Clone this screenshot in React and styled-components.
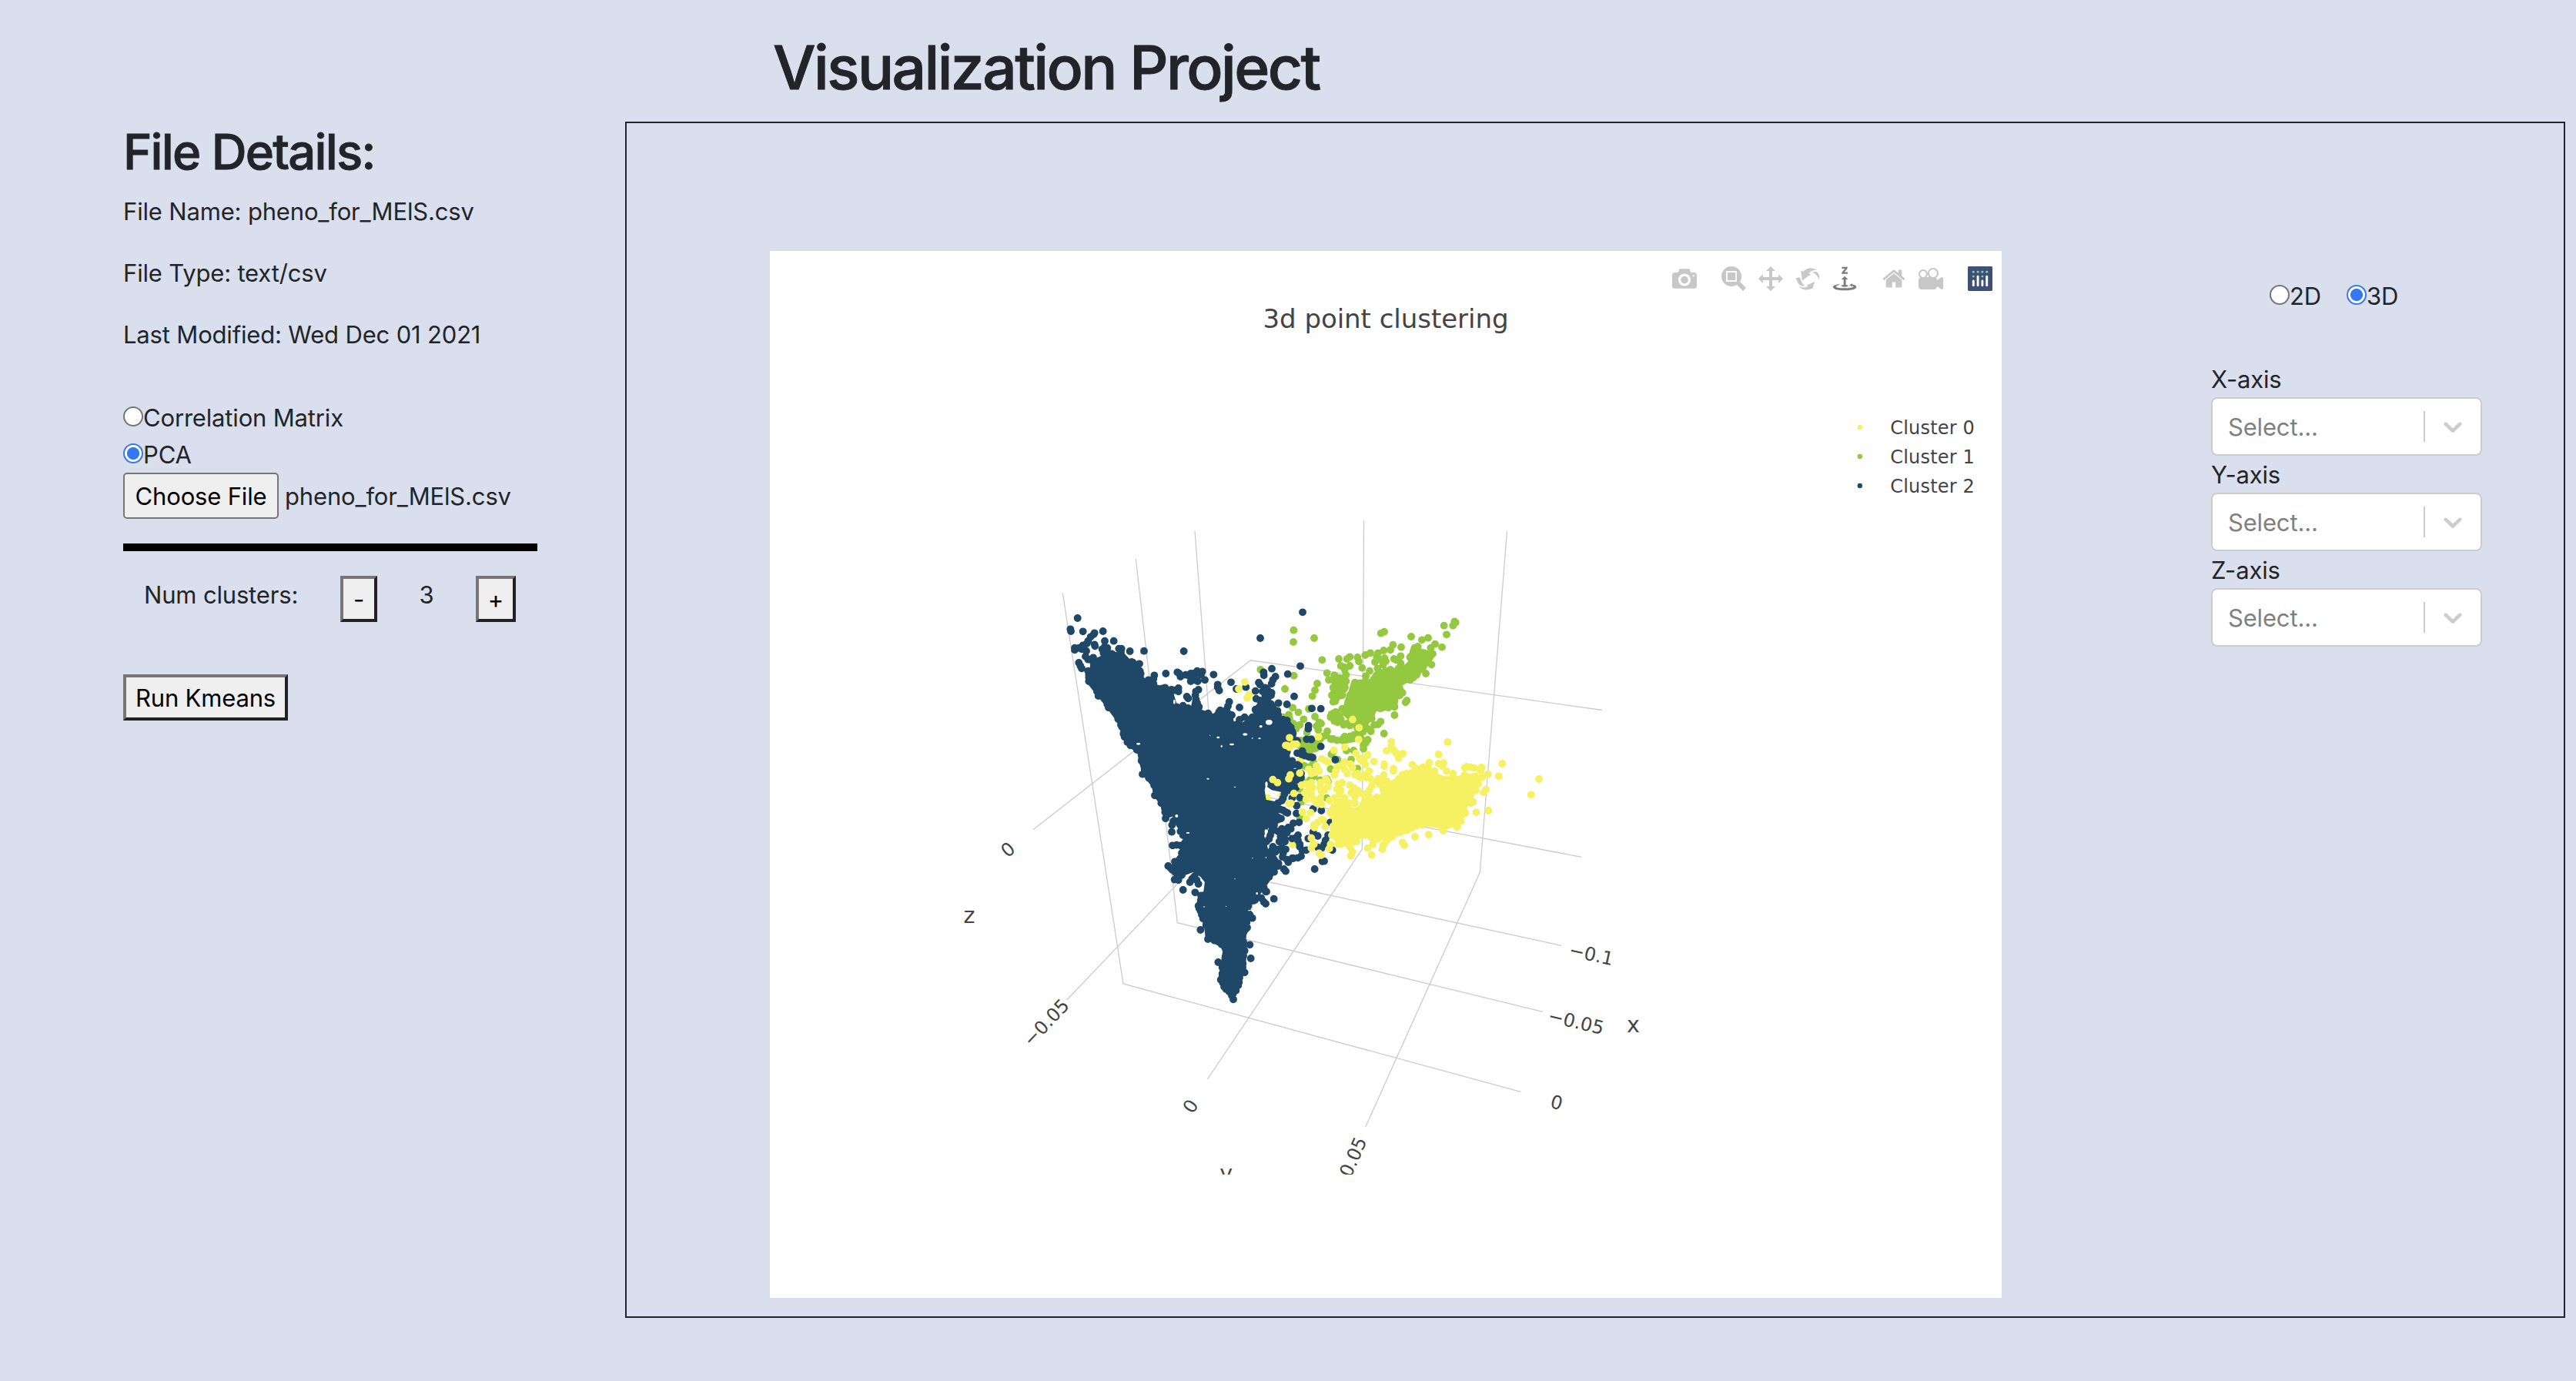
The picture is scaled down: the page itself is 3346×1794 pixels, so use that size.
import React, { useState } from "react";
import styled, { createGlobalStyle, css } from "styled-components";

const GlobalStyle = createGlobalStyle`
  *, *::before, *::after { box-sizing: border-box; }
  body {
    margin: 0;
    background: #dadfed;
    color: #212529;
    font-family: Inter, "Liberation Sans", sans-serif;
    font-size: 31px;
    line-height: 48px;
    letter-spacing: -0.17px;
  }
`;

/* ---------- layout ---------- */

const Page = styled.div`
  display: flex;
  flex-direction: column;
  width: 3346px;
  height: 1794px;
  overflow: hidden;
`;

const Header = styled.header`
  height: 158px;
  padding: 40px 0 0 1004px;
`;

const Title = styled.h1`
  margin: 0;
  font-size: 78.5px;
  font-weight: 500;
  line-height: 96px;
  letter-spacing: -2.6px;
  -webkit-text-stroke: 0.9px currentColor;
  white-space: nowrap;
`;

const Main = styled.main`
  display: flex;
  height: 1554px;
  padding-right: 14px;
`;

const Sidebar = styled.aside`
  flex: none;
  width: 812px;
  padding: 0 114px 0 160px;
`;

const Heading = styled.h2`
  margin: 0 0 15px;
  font-size: 63.5px;
  font-weight: 500;
  line-height: 78px;
  letter-spacing: -1.8px;
  -webkit-text-stroke: 0.8px currentColor;
`;

const Detail = styled.p`
  margin: 0 0 32px;
  white-space: nowrap;
`;

const Workspace = styled.section`
  flex: 1;
  display: flex;
  align-items: flex-start;
  gap: 272px;
  padding: 166px 0 0 186px;
  border: 2px solid #212529;
`;

const Plot = styled.figure`
  flex: none;
  position: relative;
  width: 1600px;
  height: 1360px;
  margin: 0;
  background: #fff;
`;

/* ---------- form controls ---------- */

const Choices = styled.div`
  display: flex;
  flex-direction: ${(p) => (p.$inline ? "row" : "column")};
  gap: ${(p) => (p.$inline ? "33px" : "0")};
  padding: ${(p) => (p.$inline ? "35px 0 59px 76px" : "28px 0 0")};
`;

const Choice = styled.label`
  display: flex;
  align-items: center;
  height: 48px;
`;

const Dot = styled.input`
  appearance: none;
  flex: none;
  width: 26px;
  height: 26px;
  margin: 0 0 4px;
  border: 2px solid #767676;
  border-radius: 50%;
  background: #fff;
  &:checked {
    border-color: #3478f6;
    background: radial-gradient(circle, #3478f6 7.6px, #fff 8.4px);
  }
`;

const FileRow = styled.div`
  display: flex;
  align-items: center;
  gap: 8px;
  height: 60px;
  margin-top: -1px;
  white-space: nowrap;
`;

const FileName = styled.span`
  padding-top: 1px;
`;

const Button = styled.button`
  height: 60px;
  padding: 1px 10px 0;
  color: #000;
  background: #efefef;
  font: inherit;
  letter-spacing: inherit;
  white-space: nowrap;
  ${(p) =>
    p.$flat
      ? css`
          width: 202px;
          border: 2px solid #767676;
          border-radius: 5px;
        `
      : css`
          width: ${p.$width}px;
          border: 4px solid;
          border-color: #767676 #212121 #212121 #767676;
        `}
`;

const Rule = styled.hr`
  height: 10px;
  margin: 32px 0;
  border: 0;
  background: #000;
`;

const Stepper = styled.div`
  display: flex;
  align-items: flex-start;
  height: 128px;
  padding-left: 27px;
`;

const StepLabel = styled.span`
  width: 255px;
  padding-top: 1px;
  white-space: nowrap;
`;

const StepValue = styled.span`
  width: 128px;
  padding-top: 1px;
  text-align: center;
`;

const Controls = styled.div`
  width: 352px;
`;

const AxisLabel = styled.div`
  height: 48px;
  padding-top: 1px;
`;

const SelectBox = styled.div`
  display: flex;
  align-items: center;
  height: 76px;
  padding-left: 20px;
  border: 2px solid #ccc;
  border-radius: 8px;
  background: #fff;
  color: #808080;
`;

const Placeholder = styled.span`
  flex: 1;
  padding-top: 1px;
`;

const Separator = styled.span`
  width: 2px;
  height: 40px;
  background: #ccc;
`;

const Chevron = styled.svg`
  width: 40px;
  height: 40px;
  margin: 0 16px;
  fill: #ccc;
`;

/* ---------- chart furniture ---------- */

const Modebar = styled.div`
  position: absolute;
  top: 20px;
  right: 12px;
  display: flex;
  gap: 32px;
`;

const ModeGroup = styled.div`
  display: flex;
  gap: 16px;
`;

const ModeIcon = styled.svg`
  display: block;
  width: 32px;
  height: 32px;
  fill: ${(p) => (p.$active ? "#7c7c7c" : "#c7c7c7")};
`;

const Scene = styled.svg`
  display: block;
  width: 1600px;
  height: 1360px;
  font-family: "DejaVu Sans", sans-serif;
  letter-spacing: 0;
`;

const ICONS = {
  camera:
    "m500 450c-83 0-150-67-150-150 0-83 67-150 150-150 83 0 150 67 150 150 0 83-67 150-150 150z m400 150h-120c-16 0-34 13-39 29l-31 93c-6 15-23 28-40 28h-340c-16 0-34-13-39-28l-31-94c-6-15-23-28-40-28h-120c-55 0-100-45-100-100v-450c0-55 45-100 100-100h800c55 0 100 45 100 100v450c0 55-45 100-100 100z m-400-550c-138 0-250 112-250 250 0 138 112 250 250 250 138 0 250-112 250-250 0-138-112-250-250-250z m365 380c-19 0-35 16-35 35 0 19 16 35 35 35 19 0 35-16 35-35 0-19-16-35-35-35z",
  zoom: "m1000-25l-250 251c40 63 63 138 63 218 0 224-182 406-407 406-224 0-406-182-406-406s183-406 407-406c80 0 155 22 218 62l250-250 125 125z m-812 250l0 438 437 0 0-438-437 0z m62 375l313 0 0-312-313 0 0 312z",
  pan: "m1000 350l-187 188 0-125-250 0 0 250 125 0-188 187-187-187 125 0 0-250-250 0 0 125-188-188 186-187 0 125 252 0 0-250-125 0 187-188 188 188-125 0 0 250 250 0 0-126 187 188z",
  orbit:
    "m922 660c-5 4-9 7-14 11-359 263-580-31-580-31l-102 28 58-400c0 1 1 1 2 2 118 108 351 249 351 249s-62 27-100 42c88 83 222 183 347 122 16-8 30-17 44-27-2 1-4 2-6 4z m36-329c0 0 64 229-88 296-62 27-124 14-175-11 157-78 225-208 249-266 8-19 11-31 11-31 2 5 6 15 11 32-5-13-8-20-8-20z m-775-239c70-31 117-50 198-32-121 80-199 346-199 346l-96-15-58-12c0 0 55-226 155-287z m603 133l-317-139c0 0 4-4 19-14 7-5 24-15 24-15s-177-147-389 4c235-287 536-112 536-112l31-22 100 299-4-1z m-298-153c6-4 14-9 24-15 0 0-17 10-24 15z",
  turntable:
    "m833 5l-17 108v41l-130-65 130-66c0 0 0 38 0 39 0-1 36-14 39-25 4-15-6-22-16-30-15-12-39-16-56-20-90-22-187-23-279-23-261 0-341 34-353 59 3 60 228 110 228 110-140-8-351-35-351-116 0-120 293-142 474-142 155 0 477 22 477 142 0 50-74 79-163 96z m-374 94c-58-5-99-21-99-40 0-24 65-43 144-43 79 0 143 19 143 43 0 19-42 34-98 40v216h87l-132 135-133-135h88v-216z m167 515h-136v1c16 16 31 34 46 52l84 109v54h-230v-71h124v-1c-16-17-28-32-44-51l-89-114v-51h245v72z",
  home: "m786 296v-267q0-15-11-26t-25-10h-214v214h-143v-214h-214q-15 0-25 10t-11 26v267q0 1 0 2t0 2l321 264 321-264q1-1 1-4z m124 39l-34-41q-5-5-12-6h-2q-7 0-12 3l-386 322-386-322q-7-4-13-4-7 2-12 7l-35 41q-4 5-3 13t6 12l401 334q18 15 42 15t43-15l136-114v109q0 8 5 13t13 5h107q8 0 13-5t5-13v-227l122-102q5-5 6-12t-4-13z",
  movie:
    "m938 413l-188-125c0 37-17 71-44 94 64 38 107 107 107 187 0 121-98 219-219 219-121 0-219-98-219-219 0-61 25-117 66-156h-115c30 33 49 76 49 125 0 103-84 187-187 187s-188-84-188-187c0-57 26-107 65-141-38-22-65-62-65-109v-250c0-70 56-126 125-126h500c69 0 125 56 125 126l188-126c34 0 62 28 62 63v375c0 35-28 63-62 63z m-750 0c-69 0-125 56-125 125s56 125 125 125 125-56 125-125-56-125-125-125z m406-1c-87 0-157 70-157 157 0 86 70 156 157 156s156-70 156-156-70-157-156-157z",
};

const MODE_GROUPS = [
  [{ name: "camera" }],
  [{ name: "zoom" }, { name: "pan" }, { name: "orbit" }, { name: "turntable", active: true }],
  [{ name: "home", units: 928.6 }, { name: "movie" }],
];

/* ---------- chart data ---------- */

const COLORS = { c0: "#f5f162", c1: "#93c83f", c2: "#1f4768" };

const GRID = [
  "M1380.3 770.3L1459 1278L1975.3 1418.3",
  "M1475.3 726L1529.3 1198.7L2004 1314.3",
  "M1552 690L1578 1030",
  "M1342 1077.7L1624.3 857.8L2081 922.5",
  "M1385.7 1299L1638 1034L2054 1113.3",
  "M1771.5 676L1769.3 1103L1568.3 1402",
  "M1957.5 690L1922.3 1133.3L1773.7 1464",
  "M1610 1137.5L2028.3 1228.3",
];

const TICKS = [
  { t: "−0.1", x: 2067, y: 1239.3, a: 12.5 },
  { t: "−0.05", x: 2047.3, y: 1327, a: 13.5 },
  { t: "0", x: 2022, y: 1431.7, a: 14 },
  { t: "0.05", x: 1757.2, y: 1502.8, a: -66.3 },
  { t: "0", x: 1546, y: 1436.7, a: -57 },
  { t: "0", x: 1309, y: 1103.3, a: -39 },
  { t: "−0.05", x: 1358.5, y: 1328, a: -46.5 },
];

const AXIS_TITLES = [
  { t: "x", x: 2121.5, y: 1340.8 },
  { t: "z", x: 1259, y: 1199 },
  { t: "y", x: 1592.7, y: 1533.5 },
];

// Marker clouds are stored in thirds of a pixel from the (1370, 760) corner
// of the scene; clusters 0 and 1 start a further 690 units to the right.
const parse = (s) => s.trim().split(/\s+/).map((p) => p.split(",").map(Number));

const C2_BODY = `133,350 133,375 165,415 205,465 247,522 262,553 272,592 295,625 330,645 338,685 352,737
  387,780 396,820 420,850 432,900 465,890 480,930 500,960 515,985 495,1015 500,1050 470,1080 460,1105
  495,1125 540,1108 575,1130 595,1155 590,1195 565,1225 565,1260 580,1300 592,1325 597,1375 650,1398
  665,1425 660,1455 653,1500 647,1538 660,1565 680,1582 700,1577 718,1548 722,1520 735,1500 735,1460
  740,1425 732,1375 748,1335 750,1290 750,1250 775,1225 800,1190 825,1155 850,1118 870,1085 850,1055
  825,1045 815,1005 805,975 825,940 850,925 862,890 868,855 815,845 808,800 815,765 850,790 900,800 930,785
  945,740 910,710 905,650 930,600 905,530 870,520 862,490 845,460 815,445 780,490 790,515 760,530 725,550
  715,580 690,545 685,515 655,495 630,515 598,505 568,495 545,455 540,480 500,490 470,480 455,430
  450,405 425,405 385,395 345,375 330,345 325,310 290,300 265,275 235,270 200,260 185,285 150,300 145,335`;

const C2 = `133,350 133,360 133,375 165,415 170,432 205,465 210,478 247,522 245,510 262,553 258,545 272,592 268,580
  283,612 295,625 320,642 335,640 338,685 342,675 342,737 350,720 367,752 387,780 396,800 396,820 390,820 415,850
  430,870 430,885 432,910 457,935 462,920 456,962 490,935 490,960 500,975 459,1015 475,1013 490,1015 495,1045
  490,1065 468,1078 480,1078 442,1095 452,1103 458,1110 470,1120 475,1122 495,1130 515,1112 540,1105 467,1148 482,1150
  527,1158 545,1135 535,1145 560,1165 553,1150 500,1188 547,1198 570,1210 580,1220 560,1250 563,1260 568,1270 573,1285
  578,1300 590,1325 568,1344 597,1380 605,1370 622,1385 637,1390 650,1400 668,1425 665,1450 637,1470 653,1490 653,1515
  647,1538 655,1550 660,1565 668,1575 680,1585 696,1615 690,1600 695,1592 706,1580 715,1560 718,1548 720,1530 740,1510
  732,1490 733,1475 731,1460 735,1445 740,1425 760,1402 764,1455 732,1372 735,1390 745,1340 750,1335 748,1315 770,1298
  755,1280 760,1285 755,1250 750,1260 780,1228 775,1230 822,1242 815,1235 805,1220 854,1223 822,1195 825,1195 815,1180
  810,1160 835,1138 855,1118 840,1125 872,1085 870,1095 910,1080 900,1115 893,1107 925,1065 930,1065 905,1070 960,1057
  948,1063 965,1035 980,1033 1013,1107 1043,1077 1050,1076 888,1060 890,1045 900,1030 885,1025 870,1030 875,1000
  840,1060 835,990 825,1000 845,960 848,945 840,975 870,960 895,970 897,990 905,965 910,945 920,950 930,928 952,925
  880,980 885,950 860,1040 845,1035 850,1020 925,988 940,985 948,975 948,995 955,1010 955,1020 890,990 885,965 897,1000
  1007,962 1025,978 988,988 1065,975 1055,995 1050,1010 1040,1025 1025,1022 1082,1033 1074,925 1007,873 1039,879
  942,890 943,860 900,885 907,888 890,878 880,875 875,912 882,910 870,905 855,935 860,920 870,910 905,650 915,690
  925,685 945,700 930,700 952,705 905,720 940,730 960,750 952,760 930,770 910,780 900,800 915,800 890,790 940,790
  925,830 955,828 905,775 960,735 890,830 895,815 870,850 885,840 965,647 962,660 945,655 1000,670 990,670 1005,672
  975,665 1093,681 1037,629 982,601 1000,602 989,548 988,560 1002,481 1037,482 933,434 905,465 872,460 908,347 957,316
  801,207 966,106 846,326 814,340 815,352 860,357 850,370 795,380 800,388 845,385 820,400 830,410 810,415 845,420
  820,430 785,443 800,450 830,440 843,430 815,455 825,460 782,485 800,480 815,475 868,490 850,500 870,505 900,530
  905,528 910,545 920,555 925,570 928,580 930,600 945,608 915,620 905,635 900,550 890,525 865,530 782,413 745,398
  708,405 687,379 720,477 680,455 675,472 670,485 685,505 690,507 645,488 640,495 630,510 660,500 598,500 585,505
  705,545 715,540 720,525 740,515 770,515 760,525 619,349 635,388 635,398 641,411 585,370 575,337 570,350 555,335
  555,345 540,345 530,345 525,355 530,375 545,370 557,375 510,350 490,357 485,345 478,340 503,258 560,408 550,415
  548,430 550,445 555,460 562,475 515,435 520,442 482,402 482,415 455,408 465,410 430,400 420,403 440,415 520,480
  500,470 490,488 475,490 475,475 433,345 388,352 385,365 385,385 375,372 365,370 348,257 293,258 230,218 195,218
  188,180 155,187 152,192 140,202 110,181 89,129 61,172 63,180 130,218 125,228 110,235 78,245 78,253 95,245 105,250
  123,257 155,232 157,238 94,303 105,325 100,315 185,250 195,240 205,245 190,265 222,268 250,248 260,248 258,262
  262,280 150,283 130,290 120,278 300,300 305,302 330,307 335,345 332,335 150,300 160,320 130,335 180,300`;

const C2_GAPS = [
  [835, 535, 13, 10], [803, 551, 6, 5], [690, 621, 9, 4], [637, 594, 6, 4], [742, 582, 9, 5], [650, 628, 3, 5],
  [597, 755, 5, 3], [702, 787, 4, 2], [326, 619, 8, 4], [475, 900, 6, 6], [825, 776, 5, 10], [823, 962, 5, 10],
  [798, 598, 5, 3], [771, 1064, 2, 2], [823, 1062, 2, 3], [702, 1145, 2, 2], [668, 1252, 2, 2], [582, 1254, 2, 3],
  [788, 1202, 4, 5], [519, 966, 7, 3], [770, 597, 3, 2], [605, 586, 2, 2], [758, 1268, 5, 2], [466, 455, 4, 9],
];

const C1_BODIES = [
  `475,380 540,380 560,350 600,330 660,335 700,300 690,280 715,250 760,265 785,268 765,300 715,355 690,370
   650,380 665,420 640,440 635,475 605,475 580,485 555,480 545,515 525,535 515,575 495,585 475,530 440,500 450,450 465,415`,
  `395,355 440,360 445,400 425,430 398,455 390,430 400,400`,
  `200,510 250,550 230,590 250,600 310,605 335,620 330,640 290,650 250,620 190,570`,
  `430,595 500,575 490,600 435,610`,
  `385,500 405,495 425,520 435,540 412,530 390,520`,
];

const C1 = `241,176 240,222 321,207 352,292 112,330 242,353 207,405 333,384 324,410 314,433 371,343 417,288 460,280
  449,288 490,282 495,298 460,315 437,320 425,315 445,350 440,330 378,370 400,352 520,273 540,265 508,323 537,335
  522,355 522,372 581,188 594,182 699,201 628,233 618,253 592,255 660,242 570,265 565,280 575,290 595,285 600,297
  558,300 590,310 568,325 632,288 640,292 658,277 658,305 650,325 618,330 625,338 565,350 600,345 827,158 862,158
  868,142 872,146 837,193 819,242 792,230 775,245 783,268 778,310 756,345 765,206 741,214 725,240 708,258 712,245
  695,282 750,265 720,275 765,300 745,320 720,350 708,360 695,370 665,375 634,507 677,457 682,450 665,420 655,430
  634,475 610,478 579,480 580,532 570,543 555,545 542,570 593,579 530,603 522,615 513,625 513,638 545,520 530,560
  395,500 385,512 405,495 400,530 385,515 420,510 412,535 425,525 436,545 430,482 440,487 455,460 470,450 460,430
  480,380 500,382 480,400 440,400 445,375 400,370 425,375 395,400 390,430 395,455 403,453 430,430 324,513 340,535
  348,540 330,550 337,565 300,483 237,478 259,496 222,505 280,523 265,545 225,520 240,540 250,560 162,468 150,480
  372,570 368,585 395,600 385,600 410,605 430,605 440,590 460,590 475,585 500,580 293,575 310,600 345,600 325,620
  335,630 280,640 300,645 265,610 355,590 475,645 465,680 447,645 412,680 388,660 395,650 385,717 489,715 315,700
  318,690 283,705 295,710 320,745 345,760 305,760 375,765 370,755 265,795 270,845 265,905 285,770 370,830 200,555
  195,565 210,540 220,632 490,540 500,525 470,500 465,520 450,540 460,548 505,600`;

const C0_BODIES = [
  `380,890 395,860 420,840 440,850 470,880 500,870 515,840 560,832 590,820 588,798 610,780 640,762 670,738 700,728
   740,715 780,725 800,745 830,755 870,755 900,750 950,740 965,760 945,790 930,830 910,860 900,900 870,930 830,945
   790,935 745,930 700,950 660,965 610,980 570,985 520,965 490,985 470,1010 450,1010 420,1000 390,975 400,930 400,900`,
];

const C0_BEHIND = `145,697 138,829 195,820 195,738 237,1010 268,680`;

const C0 = `51,378 27,405 67,428 60,440 471,524 496,556 494,602 440,632 398,644 338,592 484,656 530,662 554,688 594,698
  594,706 630,716 630,725 622,610 622,628 603,646 632,645 640,655 650,660 667,657 650,675 841,612 806,660 1054,696
  1040,745 998,737 1197,756 1166,817 1000,879 952,886 990,797 981,808 973,711 970,725 945,713 930,710 915,708 908,712
  907,740 975,750 960,775 950,800 940,845 930,850 910,888 893,920 878,943 824,957 767,973 714,981 742,935 665,1003
  672,1014 600,1000 590,1015 586,1030 550,1010 530,1025 545,1052 463,1055 470,1040 460,1020 487,1000 505,975 437,1005
  425,1010 415,1010 380,1027 385,1010 390,975 364,942 350,915 348,1053 340,1045 310,1025 320,1010 310,986 290,910
  275,885 308,887 230,850 223,852 242,812 272,780 265,733 225,595 252,620 240,620 215,625 225,632 210,625 228,740
  222,755 160,758 178,770 350,677 375,690 365,685 300,718 330,705 325,730 340,725 310,735 366,755 372,765 310,770
  290,775 315,790 345,790 345,770 375,785 285,810 300,800 290,835 320,835 345,830 350,805 360,800 310,815 330,850
  350,855 380,840 400,740 405,725 410,710 430,705 440,690 462,698 470,712 450,735 440,720 430,770 410,795 425,800
  415,775 480,740 500,750 490,735 515,740 535,725 520,700 505,685 515,680 497,675 525,750 592,740 570,755 550,770
  535,800 545,785 590,765 605,765 460,780 475,790 490,800 500,810 465,810 480,825 440,830 420,815 400,830 565,827
  540,755 575,775 590,795 460,850 480,850 535,825 520,830 515,815
  703,700 769,693 745,710 825,693 820,705 806,696 837,725 862,735 790,725 765,715 720,715 680,735 665,740 650,755
  335,925 320,935 322,945 355,915 400,870 385,885 395,900 430,900 395,940 405,935 430,950 410,960 475,900 480,930
  485,960 460,880 455,960 520,975 545,985 570,990 595,985 625,980 655,965 685,955 610,990`;

const marks = (points, r = 14.8) =>
  parse(points)
    .map(([x, y]) => `M${x - r} ${y}a${r} ${r} 0 1 0 ${2 * r} 0a${r} ${r} 0 1 0 ${-2 * r} 0`)
    .join("");

function Cloud({ color, shift = 0, bodies = [], points }) {
  return (
    <g fill={color} transform={`translate(${shift} 0)`}>
      {bodies.map((b, i) => (
        <polygon key={i} points={b} stroke={color} strokeWidth="20" strokeLinejoin="round" />
      ))}
      <path d={marks(points)} />
    </g>
  );
}

function ScatterScene() {
  return (
    <Scene viewBox="1000 326 1600 1360">
      <defs>
        <clipPath id="sceneArea">
          <rect x="1160" y="526" width="1280" height="999.7" />
        </clipPath>
      </defs>
      <text x="1800" y="425.7" fontSize="34" textLength="319" textAnchor="middle" fill="#444">
        3d point clustering
      </text>
      {[COLORS.c0, COLORS.c1, COLORS.c2].map((color, i) => (
        <g key={color}>
          <circle cx="2415.8" cy={555 + i * 38} r="3.2" fill={color} />
          <text x="2455.3" y={564 + i * 38} fontSize="24" textLength="109.5" fill="#444">
            {`Cluster ${i}`}
          </text>
        </g>
      ))}
      <g clipPath="url(#sceneArea)">
        <path d={GRID.join("")} fill="none" stroke="#cbcbcb" strokeWidth="1.3" />
        <g transform="translate(1370 760) scale(0.33333)">
          <Cloud color={COLORS.c1} shift={690} bodies={C1_BODIES} points={C1} />
          <Cloud color={COLORS.c0} shift={690} points={C0_BEHIND} />
          <Cloud color={COLORS.c2} bodies={[C2_BODY]} points={C2} />
          {C2_GAPS.map(([x, y, rx, ry]) => (
            <ellipse key={`${x}-${y}`} cx={x} cy={y} rx={rx} ry={ry} fill="#fff" />
          ))}
          <Cloud color={COLORS.c0} shift={690} bodies={C0_BODIES} points={C0} />
        </g>
        <g fill="#444" textAnchor="middle">
          {TICKS.map(({ t, x, y, a }) => (
            <text key={`${x}`} fontSize="24" transform={`translate(${x} ${y}) rotate(${a})`} y="8.8">
              {t}
            </text>
          ))}
          {AXIS_TITLES.map(({ t, x, y }) => (
            <text key={t} x={x} y={y} fontSize="28.5">
              {t}
            </text>
          ))}
        </g>
      </g>
    </Scene>
  );
}

function PlotlyMark() {
  const bar = (x, y, h) => <rect key={x} x={x} y={y} width="12" height={h} rx="6" fill="#fff" />;
  return (
    <ModeIcon viewBox="0 0 132 132">
      <rect width="132" height="132" rx="6" fill="#3f4f75" />
      {[[30, 30], [54, 30], [78, 30], [102, 30], [30, 54], [78, 54]].map(([x, y]) => (
        <circle key={`${x}-${y}`} cx={x} cy={y} r="6" fill="#80cfbe" />
      ))}
      {[bar(24, 72, 36), bar(48, 48, 60), bar(72, 72, 36), bar(96, 48, 60)]}
    </ModeIcon>
  );
}

function PlotModebar() {
  return (
    <Modebar>
      {MODE_GROUPS.map((group, i) => (
        <ModeGroup key={i}>
          {group.map(({ name, active, units = 1000 }) => (
            <ModeIcon key={name} viewBox={`0 0 ${units} 1000`} $active={active}>
              <path d={ICONS[name]} transform="matrix(1 0 0 -1 0 850)" />
            </ModeIcon>
          ))}
        </ModeGroup>
      ))}
      <PlotlyMark />
    </Modebar>
  );
}

function RadioSet({ name, options, value, onChange, inline }) {
  return (
    <Choices $inline={inline}>
      {options.map((option) => (
        <Choice key={option}>
          <Dot type="radio" name={name} checked={value === option} onChange={() => onChange(option)} />
          {option}
        </Choice>
      ))}
    </Choices>
  );
}

function AxisSelect({ label }) {
  return (
    <>
      <AxisLabel>{label}</AxisLabel>
      <SelectBox>
        <Placeholder>Select...</Placeholder>
        <Separator />
        <Chevron viewBox="0 0 20 20">
          <path d="M4.516 7.548c0.436-0.446 1.043-0.481 1.576 0l3.908 3.747 3.908-3.747c0.533-0.481 1.141-0.446 1.574 0 0.436 0.445 0.408 1.197 0 1.615-0.406 0.418-4.695 4.502-4.695 4.502-0.217 0.223-0.502 0.335-0.787 0.335s-0.57-0.112-0.789-0.335c0 0-4.287-4.084-4.695-4.502s-0.436-1.17 0-1.615z" />
        </Chevron>
      </SelectBox>
    </>
  );
}

export default function App() {
  const [method, setMethod] = useState("PCA");
  const [dimension, setDimension] = useState("3D");
  const [clusters, setClusters] = useState(3);

  return (
    <>
      <GlobalStyle />
      <Page>
        <Header>
          <Title>Visualization Project</Title>
        </Header>
        <Main>
          <Sidebar>
            <Heading>File Details:</Heading>
            <Detail>File Name: pheno_for_MElS.csv</Detail>
            <Detail>File Type: text/csv</Detail>
            <Detail>Last Modified: Wed Dec 01 2021</Detail>
            <RadioSet
              name="method"
              options={["Correlation Matrix", "PCA"]}
              value={method}
              onChange={setMethod}
            />
            <FileRow>
              <Button $flat>Choose File</Button>
              <FileName>pheno_for_MElS.csv</FileName>
            </FileRow>
            <Rule />
            <Stepper>
              <StepLabel>Num clusters:</StepLabel>
              <Button $width={48} onClick={() => setClusters(clusters - 1)}>-</Button>
              <StepValue>{clusters}</StepValue>
              <Button $width={52} onClick={() => setClusters(clusters + 1)}>+</Button>
            </Stepper>
            <Button $width={214}>Run Kmeans</Button>
          </Sidebar>
          <Workspace>
            <Plot>
              <ScatterScene />
              <PlotModebar />
            </Plot>
            <Controls>
              <RadioSet
                inline
                name="dimension"
                options={["2D", "3D"]}
                value={dimension}
                onChange={setDimension}
              />
              <AxisSelect label="X-axis" />
              <AxisSelect label="Y-axis" />
              <AxisSelect label="Z-axis" />
            </Controls>
          </Workspace>
        </Main>
      </Page>
    </>
  );
}
